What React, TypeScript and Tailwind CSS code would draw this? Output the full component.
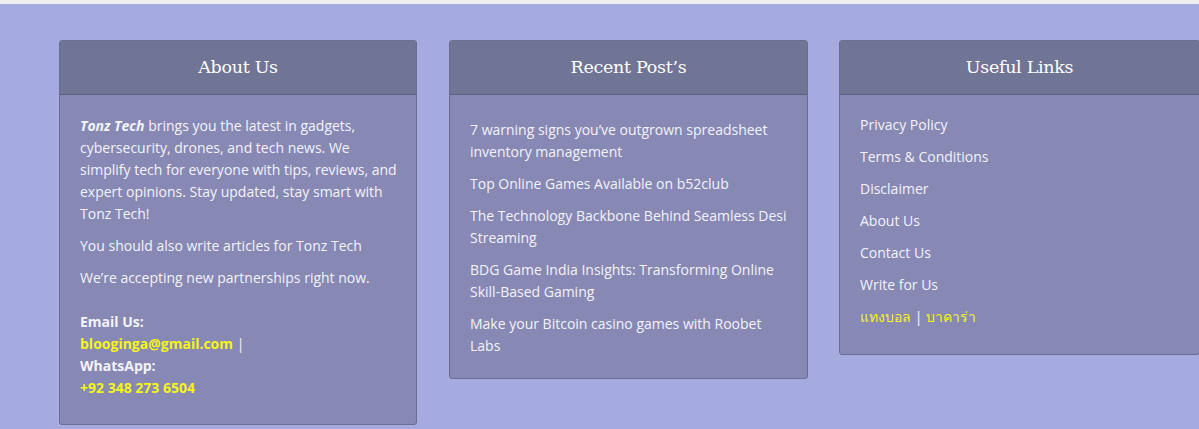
import React from 'react';

const posts = [
  '7 warning signs you’ve outgrown spreadsheet inventory management',
  'Top Online Games Available on b52club',
  'The Technology Backbone Behind Seamless Desi Streaming',
  'BDG Game India Insights: Transforming Online Skill-Based Gaming',
  'Make your Bitcoin casino games with Roobet Labs',
];

const links = ['Privacy Policy', 'Terms & Conditions', 'Disclaimer', 'About Us', 'Contact Us', 'Write for Us'];

const Card: React.FC<{ title: string; width: string; children: React.ReactNode }> = ({ title, width, children }) => (
  <div className={`${width} shrink-0 rounded-[3px] border border-[#6b6d8f] bg-[#8788b3] self-start overflow-hidden`}>
    <div className="h-[54px] flex items-center justify-center bg-[#717595] border-b border-[#5d6080]">
      <h3 className="font-['DejaVu_Serif',serif] text-[17.5px] text-white tracking-[-0.3px] leading-none">{title}</h3>
    </div>
    {children}
  </div>
);

export default function App() {
  return (
    <div className="w-[1199px] h-[429px] bg-[#a5aadf] overflow-hidden font-['Open_Sans',sans-serif] text-[14px] leading-[22px] text-[#f3f3fa]">
      <div className="h-[4px] bg-[#efefef]" />
      <div className="flex pl-[59px] pt-[36px]">
        <Card title="About Us" width="w-[358px]">
          <div className="pl-[20px] pr-[16px] pt-[20px] pb-[25px]">
            <p className="mb-[10px]">
              <strong className="italic font-bold">Tonz Tech</strong> brings you the latest in gadgets, cybersecurity, drones, and tech news. We simplify tech for everyone with tips, reviews, and expert opinions. Stay updated, stay smart with Tonz Tech!
            </p>
            <p className="mb-[10px]">You should also write articles for Tonz Tech</p>
            <p className="mb-[22px]">We’re accepting new partnerships right now.</p>
            <p className="font-bold">
              Email Us:
              <br />
              <span className="text-[#f5f51a]">blooginga@gmail.com</span> <span className="font-normal">|</span>
              <br />
              WhatsApp:
              <br />
              <span className="text-[#f5f51a]">+92 348 273 6504</span>
            </p>
          </div>
        </Card>
        <div className="w-[32px] shrink-0" />
        <Card title="Recent Post’s" width="w-[359px]">
          <ul className="px-[20px] pt-[24px] pb-[21px] flex flex-col gap-[10px]">
            {posts.map((p) => (
              <li key={p}>{p}</li>
            ))}
          </ul>
        </Card>
        <div className="w-[31px] shrink-0" />
        <Card title="Useful Links" width="w-[361px]">
          <ul className="px-[20px] pt-[19px] pb-[26px] flex flex-col gap-[10px]">
            {links.map((l) => (
              <li key={l}>{l}</li>
            ))}
            <li className="text-[#f5f51a] font-['Noto_Sans',sans-serif]">
              แทงบอล <span className="text-[#f3f3fa]">|</span> บาคาร่า
            </li>
          </ul>
        </Card>
      </div>
    </div>
  );
}
